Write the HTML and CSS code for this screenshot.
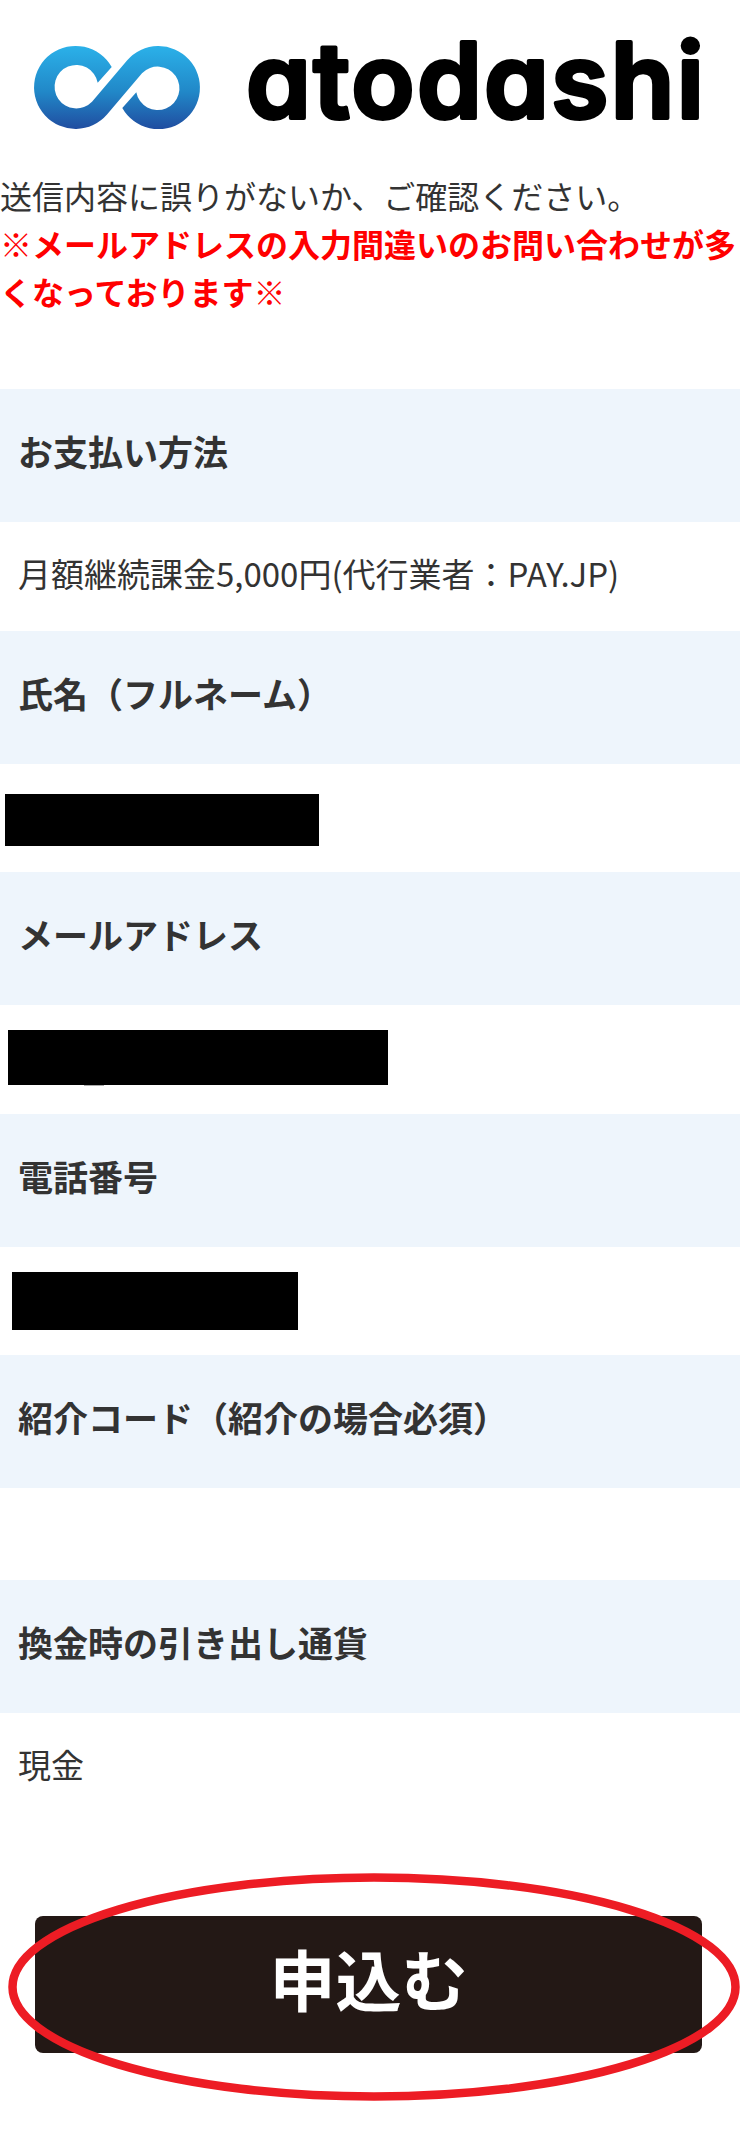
FILE: index.html
```html
<!DOCTYPE html>
<html lang="ja">
<head>
<meta charset="utf-8">
<title>atodashi</title>
<link rel="stylesheet" href="styles.css">
</head>
<body>
<header class="logo">
<svg class="logo-art" viewBox="0 0 740 173" width="740" height="173" role="img" aria-label="atodashi">
<defs>
<linearGradient id="inf" gradientUnits="userSpaceOnUse" x1="0" y1="46" x2="0" y2="129">
<stop offset="0" stop-color="#2bb1e9"/>
<stop offset="0.55" stop-color="#2188c8"/>
<stop offset="1" stop-color="#204da0"/>
</linearGradient>
</defs>
<path fill="url(#inf)" d="M111.7 67A41.5 41.5 0 1 0 107 114.5L142 73.3A21.75 21.75 0 1 1 136.3 92.3L122.3 108A41.5 41.5 0 1 0 127 60.5L92 101.7A21.75 21.75 0 1 1 97.7 82.7Z"/>
<text class="logo-text" x="246" y="118" textLength="458" lengthAdjust="spacing">atodashi</text>
</svg>
</header>

<p class="intro">送信内容に誤りがないか、ご確認ください。<br><strong class="warn">※メールアドレスの入力間違いのお問い合わせが多くなっております※</strong></p>

<dl class="summary">
<dt class="label">お支払い方法</dt>
<dd class="value">月額継続課金5,000円(代行業者：PAY.JP)</dd>
<dt class="label">氏名（フルネーム）</dt>
<dd class="value"><span class="redact redact-name"></span></dd>
<dt class="label">メールアドレス</dt>
<dd class="value"><span class="redact redact-mail"></span></dd>
<dt class="label">電話番号</dt>
<dd class="value"><span class="redact redact-tel"></span></dd>
<dt class="label">紹介コード（紹介の場合必須）</dt>
<dd class="value value-empty"></dd>
<dt class="label">換金時の引き出し通貨</dt>
<dd class="value">現金</dd>
</dl>

<div class="cta">
<button class="submit" type="button">申込む</button>
<svg class="ring" viewBox="0 0 740 228" width="740" height="228" aria-hidden="true">
<ellipse cx="374" cy="114" rx="361.5" ry="109.5" fill="none" stroke="#ed1c24" stroke-width="8.5"/>
</svg>
</div>
</body>
</html>
```
FILE: styles.css
```css
html, body {
  margin: 0;
  padding: 0;
  background: #fff;
}
body {
  width: 740px;
  height: 2135px;
  overflow: hidden;
  color: #333;
  font-family: "Noto Sans CJK JP", "Noto Sans", sans-serif;
}
.logo {
  height: 171px;
}
.logo-art {
  display: block;
}
.logo-text {
  font-family: Inter, "Noto Sans", sans-serif;
  font-size: 104px;
  font-weight: 600;
  font-feature-settings: "cv11" 1;
  fill: #000;
  stroke: #000;
  stroke-width: 4px;
  stroke-linejoin: round;
}
.intro {
  margin: 0 0 74px;
  font-size: 32px;
  line-height: 48px;
}
.warn {
  color: #f00;
  font-weight: 700;
}
.summary {
  margin: 0;
}
.label {
  height: 133px;
  box-sizing: border-box;
  padding: 36px 0 0 18px;
  background: #eef5fc;
  font-size: 35px;
  font-weight: 700;
  line-height: 51px;
}
.value {
  height: 108.5px;
  box-sizing: border-box;
  margin: 0;
  padding: 27px 0 0 18px;
  font-size: 33px;
  line-height: 48px;
}
.value-empty {
  height: 92px;
}
.redact {
  display: block;
  position: relative;
  background: #000;
}
.redact-name {
  width: 314px;
  height: 52px;
  margin: 3px 0 0 -13px;
}
.redact-mail {
  width: 380px;
  height: 55px;
  margin: -2px 0 0 -10px;
}
.redact-mail::after {
  content: "";
  position: absolute;
  left: 76px;
  top: 100%;
  width: 20px;
  height: 1px;
  background: #aaa;
}
.redact-tel {
  width: 286px;
  height: 58px;
  margin: -2px 0 0 -6px;
}
.cta {
  position: relative;
  height: 313.5px;
  padding-top: 94px;
  box-sizing: border-box;
}
.submit {
  display: block;
  width: 667px;
  height: 137px;
  margin: 0 0 0 35px;
  padding: 0 0 14px;
  border: 0;
  border-radius: 8px;
  background: #231815;
  color: #fff;
  font-family: inherit;
  font-size: 66px;
  font-weight: 700;
  line-height: 1;
}
.ring {
  position: absolute;
  left: 0;
  top: 51px;
}
```
